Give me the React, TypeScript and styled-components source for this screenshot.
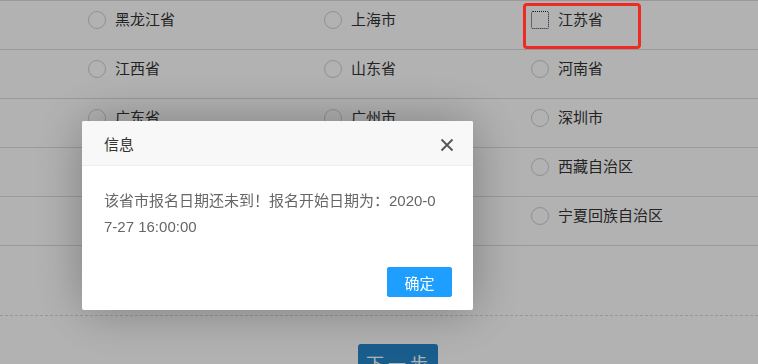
import styled, { createGlobalStyle } from 'styled-components';

const GlobalStyle = createGlobalStyle`
  html, body {
    margin: 0;
    padding: 0;
    background: #fff;
    font-family: "Liberation Sans", "Noto Sans CJK SC", sans-serif;
    overflow: hidden;
  }
`;

const rows: string[][] = [
  ['黑龙江省', '上海市', '江苏省'],
  ['江西省', '山东省', '河南省'],
  ['广东省', '广州市', '深圳市'],
  ['浙江省', '杭州市', '西藏自治区'],
  ['四川省', '成都市', '宁夏回族自治区'],
];

export default function App() {
  return (
    <>
      <GlobalStyle />
      <Page>
        <List>
          {rows.map((row, i) => (
            <Row key={i}>
              {row.map((name) => (
                <Option key={name}>
                  <Radio focused={name === '江苏省'} />
                  <Label>{name}</Label>
                </Option>
              ))}
            </Row>
          ))}
        </List>
        <Footer>
          <NextButton>下一步</NextButton>
        </Footer>
      </Page>
      <Shade />
      <Dialog>
        <DialogHeader>
          <DialogTitle>信息</DialogTitle>
          <CloseButton aria-label="close">
            <svg width="14" height="14" viewBox="0 0 14 14">
              <path d="M1.5 1.5 L12.5 12.5 M12.5 1.5 L1.5 12.5" stroke="#555" strokeWidth="1.8" />
            </svg>
          </CloseButton>
        </DialogHeader>
        <DialogBody>该省市报名日期还未到！报名开始日期为：2020-07-27 16:00:00</DialogBody>
        <DialogFooter>
          <OkButton>确定</OkButton>
        </DialogFooter>
      </Dialog>
      <Marker />
    </>
  );
}

const Page = styled.div`
  width: 758px;
  height: 364px;
  overflow: hidden;
`;

const List = styled.div`
  border-top: 1px solid #dcdcdc;
`;

const Row = styled.div`
  display: grid;
  grid-template-columns: 236px 207px 1fr;
  height: 49px;
  box-sizing: border-box;
  padding: 7px 0 0 88px;
  border-bottom: 1px solid #dcdcdc;
`;

const Option = styled.div`
  display: flex;
  align-items: center;
  height: 24px;
  gap: 9px;
`;

const Radio = styled.span<{ focused?: boolean }>`
  width: 18px;
  height: 18px;
  box-sizing: border-box;
  border-radius: ${(p) => (p.focused ? '2px' : '50%')};
  border: ${(p) => (p.focused ? '1px dotted #222' : '1px solid #d0d0d0')};
  background: ${(p) => (p.focused ? 'transparent' : '#fff')};
`;

const Label = styled.span`
  font-size: 15px;
  line-height: 24px;
  color: #333;
`;

const Footer = styled.div`
  margin-top: 69px;
  border-top: 1px dashed #d8d8d8;
  padding: 28px 0 0 358px;
`;

const NextButton = styled.button`
  width: 80px;
  height: 38px;
  padding: 0 0 0 2px;
  border: none;
  border-radius: 3px;
  background: #2586cb;
  color: #fff;
  font-family: inherit;
  font-size: 18px;
  letter-spacing: 4px;
`;

const Shade = styled.div`
  position: fixed;
  inset: 0;
  background: rgba(0, 0, 0, 0.3);
`;

const Dialog = styled.div`
  position: fixed;
  left: 82px;
  top: 121px;
  width: 391px;
  background: #fff;
  border-radius: 2px;
  box-shadow: 1px 1px 50px rgba(0, 0, 0, 0.3);
`;

const DialogHeader = styled.div`
  display: flex;
  align-items: center;
  justify-content: space-between;
  height: 44px;
  padding: 0 19px 0 22px;
  background: #f8f8f8;
  border-bottom: 1px solid #eee;
  border-radius: 2px 2px 0 0;
`;

const DialogTitle = styled.span`
  font-size: 15px;
  color: #333;
  padding-top: 1px;
`;

const CloseButton = styled.span`
  display: flex;
  padding-top: 3px;
`;

const DialogBody = styled.div`
  padding: 22px 33px 20px 22px;
  font-size: 15px;
  line-height: 26px;
  color: #666;
  word-break: break-all;
`;

const DialogFooter = styled.div`
  display: flex;
  justify-content: flex-end;
  padding: 7px 21px 13px;
`;

const OkButton = styled.button`
  width: 65px;
  height: 30px;
  border: 1px solid #1e9fff;
  border-radius: 2px;
  background: #1e9fff;
  color: #fff;
  font-family: inherit;
  font-size: 15px;
  cursor: pointer;
`;

const Marker = styled.div`
  position: fixed;
  left: 523px;
  top: 3px;
  width: 118px;
  height: 46px;
  box-sizing: border-box;
  border: 3px solid #ee2a22;
  border-radius: 4px;
`;
